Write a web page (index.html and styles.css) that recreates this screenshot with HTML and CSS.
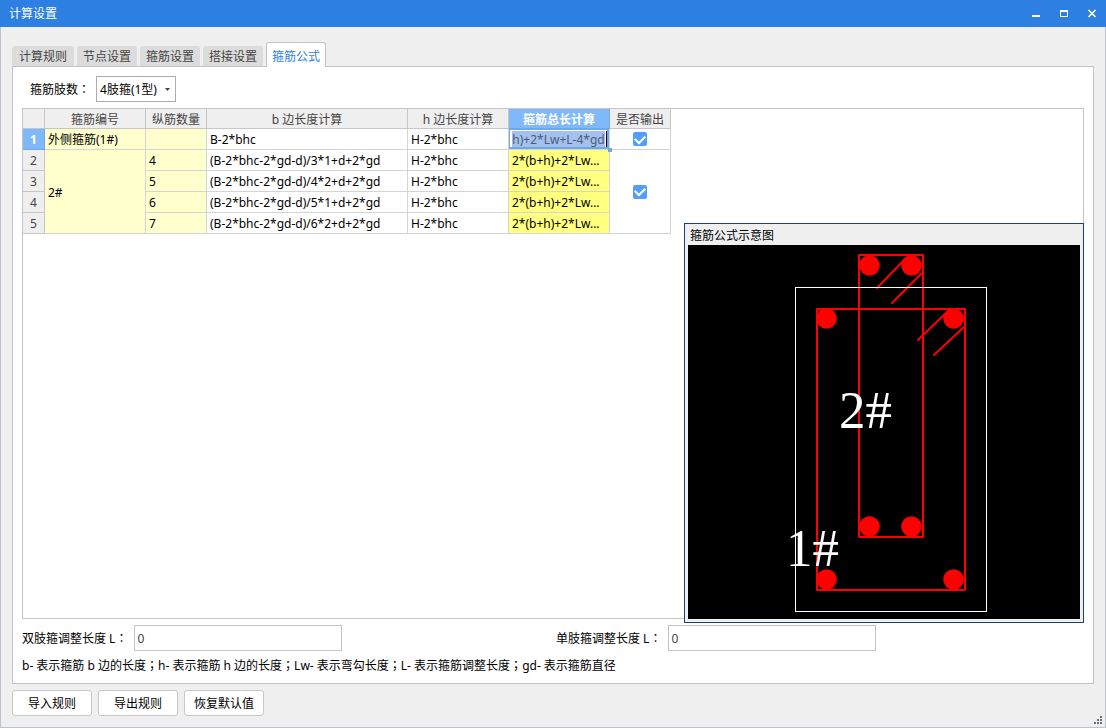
FILE: index.html
```html
<!DOCTYPE html>
<html lang="zh-CN">
<head>
<meta charset="utf-8">
<title>计算设置</title>
<link rel="stylesheet" href="styles.css">
</head>
<body>
<div class="window">
  <header class="titlebar">
    <h1 class="title">计算设置</h1>
    <div class="window-controls">
      <button class="window-button" type="button" aria-label="最小化"><svg width="10" height="10" viewBox="0 0 10 10" shape-rendering="crispEdges"><path d="M1 6h8v2H1z" fill="#fff"/></svg></button>
      <button class="window-button" type="button" aria-label="最大化"><svg width="10" height="10" viewBox="0 0 10 10" shape-rendering="crispEdges"><path d="M1 1h8v7H1zM2 3v4h6V3z" fill="#fff" fill-rule="evenodd"/></svg></button>
      <button class="window-button" type="button" aria-label="关闭"><svg width="10" height="10" viewBox="0 0 10 10"><path d="M1.500 1l7 7M8.500 1l-7 7" stroke="#fff" stroke-width="1.600"/></svg></button>
    </div>
  </header>

  <main class="content">
    <div class="tabs" role="tablist">
      <button class="tab" type="button" role="tab">计算规则</button>
      <button class="tab" type="button" role="tab">节点设置</button>
      <button class="tab" type="button" role="tab">箍筋设置</button>
      <button class="tab" type="button" role="tab">搭接设置</button>
      <button class="tab tab-active" type="button" role="tab" aria-selected="true">箍筋公式</button>
    </div>

    <section class="panel">
      <div class="limb-row">
        <label for="limbs">箍筋肢数<span class="punct" lang="zh-TW">：</span></label>
        <div class="select-box">
          <select id="limbs" class="select"><option>4肢箍(1型)</option></select>
          <svg class="select-arrow" width="5" height="3" viewBox="0 0 5 3"><path d="M0 0h5L2.500 3z" fill="#444"/></svg>
        </div>
      </div>

      <div class="grid-area">
        <table class="grid">
          <colgroup><col class="col-index"><col class="col-mid"><col class="col-small"><col class="col-wide"><col class="col-mid"><col class="col-mid"><col class="col-small"></colgroup>
          <thead>
            <tr><th></th><th>箍筋编号</th><th>纵筋数量</th><th>b 边长度计算</th><th>h 边长度计算</th><th class="head-active">箍筋总长计算</th><th>是否输出</th></tr>
          </thead>
          <tbody>
            <tr><th class="head-active">1</th><td class="fixed">外侧箍筋(1#)</td><td class="fixed"></td><td>B-2*bhc</td><td>H-2*bhc</td><td class="editing"><input class="editor" id="editor" type="text" aria-label="箍筋总长计算" value="2*(b+h)+2*Lw+L-4*gd"></td><td class="check-cell"><input class="check" type="checkbox" aria-label="输出外侧箍筋" checked></td></tr>
            <tr><th>2</th><td class="fixed" rowspan="4">2#</td><td class="fixed">4</td><td>(B-2*bhc-2*gd-d)/3*1+d+2*gd</td><td>H-2*bhc</td><td class="changed">2*(b+h)+2*Lw...</td><td class="check-cell" rowspan="4"><input class="check" type="checkbox" aria-label="输出2#" checked></td></tr>
            <tr><th>3</th><td class="fixed">5</td><td>(B-2*bhc-2*gd-d)/4*2+d+2*gd</td><td>H-2*bhc</td><td class="changed">2*(b+h)+2*Lw...</td></tr>
            <tr><th>4</th><td class="fixed">6</td><td>(B-2*bhc-2*gd-d)/5*1+d+2*gd</td><td>H-2*bhc</td><td class="changed">2*(b+h)+2*Lw...</td></tr>
            <tr><th>5</th><td class="fixed">7</td><td>(B-2*bhc-2*gd-d)/6*2+d+2*gd</td><td>H-2*bhc</td><td class="changed">2*(b+h)+2*Lw...</td></tr>
          </tbody>
        </table>

        <aside class="preview">
          <h2 class="preview-title">箍筋公式示意图</h2>
          <svg class="diagram" width="392" height="374" viewBox="0 0 392 374">
            <g fill="none" stroke="#f00" stroke-width="2" stroke-linejoin="round" stroke-linecap="round">
              <rect x="171" y="10" width="64" height="282"/>
              <rect x="129" y="64" width="148" height="281"/>
              <path d="M189 43l29-30M204 58l30-30M230 95l30-29M246 110l30-28"/>
            </g>
            <g fill="#f00">
              <circle cx="181.500" cy="20.500" r="10.300"/><circle cx="223.500" cy="20.500" r="10.300"/>
              <circle cx="181.500" cy="281.500" r="10.300"/><circle cx="223.500" cy="281.500" r="10.300"/>
              <circle cx="138.500" cy="73.500" r="10.300"/><circle cx="265.500" cy="73.500" r="10.300"/>
              <circle cx="138.500" cy="334.500" r="10.300"/><circle cx="265.500" cy="334.500" r="10.300"/>
            </g>
            <rect x="107.500" y="42.500" width="191" height="324" fill="none" stroke="#fff"/>
            <text class="mark" x="151" y="183">2#</text>
            <text class="mark" x="98" y="321">1#</text>
          </svg>
        </aside>
      </div>

      <div class="lengths">
        <div class="field"><label for="double">双肢箍调整长度 L<span class="punct" lang="zh-TW">：</span></label><input id="double" class="text-input" type="text" value="0"></div>
        <div class="field"><label for="single">单肢箍调整长度 L<span class="punct" lang="zh-TW">：</span></label><input id="single" class="text-input" type="text" value="0"></div>
      </div>
      <p class="legend">b- 表示箍筋 b 边的长度<span class="punct" lang="zh-TW">；</span>h- 表示箍筋 h 边的长度<span class="punct" lang="zh-TW">；</span>Lw- 表示弯勾长度<span class="punct" lang="zh-TW">；</span>L- 表示箍筋调整长度<span class="punct" lang="zh-TW">；</span>gd- 表示箍筋直径</p>
    </section>
  </main>

  <footer class="footer">
    <button class="button" type="button">导入规则</button>
    <button class="button" type="button">导出规则</button>
    <button class="button" type="button">恢复默认值</button>
    <svg class="grip" width="8" height="8" viewBox="0 0 8 8" shape-rendering="crispEdges"><path d="M6 0h2v2H6zM3 3h2v2H3zM6 3h2v2H6zM0 6h2v2H0zM3 6h2v2H3zM6 6h2v2H6z" fill="#6b7080"/></svg>
  </footer>
</div>
<script src="script.js"></script>
</body>
</html>
```
FILE: script.js
```js
// Show the end of the formula, where the caret stands.
const editor = document.getElementById("editor");
editor.scrollLeft = editor.scrollWidth;
```
FILE: styles.css
```css
* {
  box-sizing: border-box;
}

body {
  margin: 0;
  color: #000;
  font: 12px/16px "Noto Sans", "Noto Sans CJK SC", sans-serif;
}

button,
input,
select {
  margin: 0;
  font: inherit;
  color: inherit;
}

.punct {
  font-family: "Noto Sans CJK TC", sans-serif;
  line-height: 1;
}

.window {
  display: flex;
  flex-direction: column;
  min-height: 100vh;
  background: #efefef;
  border: 1px solid #bcc2ce;
  border-top: 0;
}

.titlebar {
  display: flex;
  align-items: center;
  justify-content: space-between;
  height: 27px;
  margin: 0 -1px;
  padding: 0 9px;
  color: #fff;
  background: #2d80e2;
}

.title {
  margin: 0;
  font-size: 12px;
  font-weight: 400;
}

.window-controls {
  display: flex;
  gap: 18px;
}

.window-button {
  display: flex;
  padding: 1px 0 0;
  background: none;
  border: 0;
}

.content {
  display: flex;
  flex: 1;
  flex-direction: column;
  padding: 15px 11px 0;
}

.tabs {
  display: flex;
  align-items: flex-end;
  gap: 3px;
}

.tab {
  height: 20px;
  padding: 2px 6px 0;
  color: #444;
  background: #dcdcdc;
  border: 0;
  border-radius: 3px 3px 0 0;
}

.tab:first-child {
  padding: 2px 7px 0;
}

.tab-active {
  z-index: 1;
  height: 25px;
  margin-bottom: -1px;
  padding: 3px 5px 0;
  color: #2d80e2;
  background: #fff;
  border: 1px solid #c3c4cb;
  border-bottom: 0;
}

.panel {
  display: flex;
  flex: 1;
  flex-direction: column;
  padding: 9px;
  background: #fff;
  border: 1px solid #c3c4cb;
}

.limb-row {
  display: flex;
  align-items: center;
  gap: 6px;
  padding-left: 8px;
}

.limb-row label {
  padding-top: 2px;
}

.select-box {
  position: relative;
}

.select {
  display: block;
  width: 80px;
  height: 26px;
  padding: 1px 3px 0;
  background: #fff;
  border: 1px solid #adadad;
  border-radius: 0;
  appearance: none;
}

.select-arrow {
  position: absolute;
  top: 12px;
  right: 6px;
  pointer-events: none;
}

.grid-area {
  position: relative;
  flex: 1;
  margin-top: 6px;
  border: 1px solid #c3c4cb;
}

.grid {
  width: 648px;
  border-spacing: 0;
  table-layout: fixed;
}

.col-index {
  width: 22px;
}

.col-small {
  width: 61px;
}

.col-mid {
  width: 101px;
}

.col-wide {
  width: 201px;
}

.grid th,
.grid td {
  height: 21px;
  padding: 2px 3px 0;
  white-space: nowrap;
  border: solid #d4d4d4;
  border-width: 0 1px 1px 0;
}

.grid th {
  padding: 2px 0 0;
  color: #444;
  font-weight: 400;
  background: #efefef;
  border-color: #c6c6c6;
}

.grid thead th {
  height: 20px;
}

.grid .head-active {
  color: #fff;
  font-weight: 700;
  background: #7fb9f9;
  border-color: #6ea8e6;
}

.grid .fixed {
  background: #ffffcd;
}

.grid .changed {
  background: #ffff80;
}

.grid .editing {
  position: relative;
  padding: 0;
}

.editing::before {
  position: absolute;
  top: 2px;
  right: 2px;
  width: 1px;
  height: 16px;
  content: "";
  background: #000;
}

.editing::after {
  position: absolute;
  right: -3px;
  bottom: -3px;
  width: 4px;
  height: 4px;
  content: "";
  background: #6ea8e6;
}

.editor {
  display: block;
  width: 100%;
  height: 20px;
  padding: 1px 2px 0;
  color: #4d5d77;
  background: #a3c1ee content-box;
  border: 1px solid #6ea8e6;
  border-width: 1px 2px 2px 1px;
  outline: 0;
}

.grid .check-cell {
  padding: 0;
}

.check {
  display: grid;
  width: 14px;
  height: 14px;
  margin: 0 auto;
  place-items: center;
  background: #519ffa;
  border-radius: 2px;
  appearance: none;
}

.check:checked::after {
  width: 8px;
  height: 5px;
  margin-bottom: 2px;
  content: "";
  border: solid #fff;
  border-width: 0 0 2px 2px;
  transform: rotate(-45deg);
}

.preview {
  position: absolute;
  right: -1px;
  bottom: -5px;
  padding: 0 3px 3px;
  background: #efefef;
  border: 1px solid #1c3f75;
}

.preview-title {
  margin: 0;
  padding: 3px 0 0 2px;
  font-size: 12px;
  font-weight: 400;
  line-height: 18px;
}

.diagram {
  display: block;
  background: #000;
}

.mark {
  fill: #fff;
  font: 53px "Liberation Serif", serif;
}

.lengths {
  display: grid;
  grid-template-columns: 1fr 1fr;
  gap: 6px;
  margin-top: 6px;
}

.field {
  display: flex;
  align-items: center;
  gap: 7px;
}

.field label {
  padding-top: 2px;
}

.text-input {
  width: 208px;
  height: 26px;
  padding: 1px 2px 0;
  color: #444;
  background: #fff;
  border: 1px solid #c3c4cb;
}

.legend {
  margin: 7px 0 0;
}

.footer {
  display: flex;
  align-items: center;
  gap: 6px;
  padding: 6px 3px 11px 11px;
}

.button {
  width: 80px;
  height: 26px;
  padding: 2px 0 0;
  background: #fff;
  border: 1px solid #c8c8c8;
  border-radius: 3px;
}

.grip {
  align-self: flex-end;
  margin: 0 0 -8px auto;
}
```
